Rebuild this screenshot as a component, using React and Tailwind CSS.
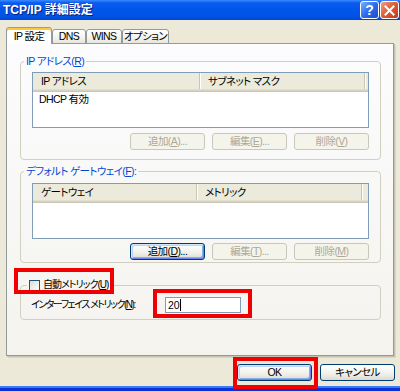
import React from 'react';

const F = "font-['Liberation_Sans','Noto_Sans_CJK_JP',sans-serif] [font-feature-settings:'palt']";
const T = 'text-[10.5px] tracking-[-0.6px] whitespace-nowrap';

function U({ children }) {
  return <span className="underline underline-offset-[1px]">{children}</span>;
}

function Btn({ children, disabled, focused, w = 'w-[75px]' }) {
  if (disabled) {
    return (
      <div className={`${w} h-[17px] flex items-center justify-center rounded-[3px] border border-[#C9C7BA] bg-[#F5F4EA] text-[#ACA899] ${T} leading-none`}>
        {children}
      </div>
    );
  }
  return (
    <div
      className={`${w} h-[17px] flex items-center justify-center rounded-[3px] border border-[#003C74] bg-[linear-gradient(to_bottom,#FFFFFF,#F0F0EA_60%,#DCDAD0)] text-black ${T} leading-none ${
        focused ? 'shadow-[inset_1px_1px_0_#CEE7FF,inset_-1px_-1px_0_#6982EE,inset_2px_2px_0_#BCD4F6,inset_-2px_-2px_0_#89ADE4]' : ''
      }`}
    >
      {children}
    </div>
  );
}

function ListBox({ col1, col2, rows, w1 = 'w-[167px]' }) {
  return (
    <div className="h-[56px] border border-[#7F9DB9] bg-white flex flex-col">
      <div className={`h-[19px] flex bg-[#EBEADB] shadow-[inset_0_-1px_0_#CBC7B8,inset_0_-2px_0_#D6D2C2,inset_0_-3px_0_#E2DECD] ${T} leading-none`}>
        <div className={`${w1} h-[16px] flex items-center pl-[8px] border-r border-[#C7C5B2] shadow-[1px_0_0_#FFFFFF]`}>{col1}</div>
        <div className="w-[165px] h-[16px] flex items-center pl-[8px] border-r border-[#C7C5B2] shadow-[1px_0_0_#FFFFFF]">{col2}</div>
      </div>
      {rows.map((r) => (
        <div key={r} className={`h-[14px] flex items-center pl-[6px] ${T} leading-none text-black`}>
          {r}
        </div>
      ))}
    </div>
  );
}

export default function App() {
  return (
    <div className={`${F} relative w-[400px] h-[391px] bg-[#ECE9D8] flex flex-col overflow-hidden text-black`}>
      {/* Title bar */}
      <div className="h-[20px] shrink-0 flex items-center pl-[3px] pr-[1px] bg-[linear-gradient(to_bottom,#3D8BFF_0%,#0A5CEF_14%,#0055E9_50%,#0052E3_85%,#0043D2_100%)]">
        <span className="text-white font-bold text-[12px] leading-none [text-shadow:1px_1px_0_#0A1E80] whitespace-nowrap">TCP/IP 詳細設定</span>
        <div className="ml-auto flex gap-[1px]">
          <div className="w-[19px] h-[18px] rounded-[3px] border border-white bg-[linear-gradient(135deg,#7FAEFF,#2E6BF0_50%,#1A4CCB)] flex items-center justify-center text-white font-bold text-[14px] leading-none font-['Liberation_Sans',sans-serif]">
            ?
          </div>
          <div className="w-[19px] h-[18px] rounded-[3px] border border-white bg-[linear-gradient(135deg,#F0A088,#E0592F_50%,#C23A1C)] flex items-center justify-center">
            <svg width="11" height="11" viewBox="0 0 11 11">
              <path d="M1.5 1.5 L9.5 9.5 M9.5 1.5 L1.5 9.5" stroke="white" strokeWidth="2" strokeLinecap="square" />
            </svg>
          </div>
        </div>
      </div>

      {/* Body */}
      <div className="flex-1 flex flex-col pl-[6px] pr-[5px] pt-[7px]">
        {/* Tabs */}
        <div className={`flex items-end relative z-10 -mb-px ${T} leading-none`}>
          <div className="w-[46px] h-[17px] bg-white border-x border-t border-[#E68B2C] border-x-[#919B9C] rounded-t-[3px] shadow-[inset_0_2px_0_#FFC83C] flex items-center justify-center pt-[1px]">
            IP 設定
          </div>
          <div className="w-[34px] h-[15px] border border-[#919B9C] rounded-t-[3px] bg-[linear-gradient(to_bottom,#FFFFFF,#F3F2EC_60%,#E7E5DC)] flex items-center justify-center">
            DNS
          </div>
          <div className="w-[36px] h-[15px] border border-[#919B9C] rounded-t-[3px] bg-[linear-gradient(to_bottom,#FFFFFF,#F3F2EC_60%,#E7E5DC)] flex items-center justify-center">
            WINS
          </div>
          <div className="w-[47px] h-[15px] border border-[#919B9C] rounded-t-[3px] bg-[linear-gradient(to_bottom,#FFFFFF,#F3F2EC_60%,#E7E5DC)] flex items-center justify-center">
            オプション
          </div>
        </div>

        {/* Panel */}
        <div className="w-[388px] h-[313px] shrink-0 border border-[#919B9C] bg-[linear-gradient(to_bottom,#FCFCFE,#F4F3EE)] shadow-[1px_1px_0_#C5C2B2,2px_2px_0_#DAD7CA] pl-[13px] pr-[12px] pt-[10px] flex flex-col">
          {/* IP address group */}
          <fieldset className="border border-[#D0D0BF] rounded-[4px] p-0 m-0 min-w-0">
            <legend className={`ml-[3px] px-[2px] ${T} leading-[14px] text-[#0046D5]`}>
              IP アドレス(<U>R</U>)
            </legend>
            <div className="pt-[4px] px-[11px] pb-[9px]">
              <ListBox col1="IP アドレス" col2="サブネット マスク" rows={['DHCP 有効']} />
              <div className="mt-[5px] flex justify-end gap-[7px]">
                <Btn disabled>追加(<U>A</U>)...</Btn>
                <Btn disabled>編集(<U>E</U>)...</Btn>
                <Btn disabled>削除(<U>V</U>)</Btn>
              </div>
            </div>
          </fieldset>

          {/* Default gateway group */}
          <fieldset className="mt-[4px] border border-[#D0D0BF] rounded-[4px] p-0 min-w-0">
            <legend className={`ml-[3px] px-[2px] ${T} leading-[14px] text-[#0046D5]`}>
              デフォルト ゲートウェイ(<U>F</U>):
            </legend>
            <div className="pt-[5px] px-[11px] pb-[2px]">
              <ListBox col1="ゲートウェイ" col2="メトリック" rows={[]} w1="w-[164px]" />
              <div className="mt-[4px] flex justify-end gap-[7px]">
                <Btn focused>追加(<U>D</U>)...</Btn>
                <Btn disabled>編集(<U>T</U>)...</Btn>
                <Btn disabled>削除(<U>M</U>)</Btn>
              </div>
            </div>
          </fieldset>

          {/* Metric group */}
          <fieldset className="mt-[15px] border border-[#D0D0BF] rounded-[4px] p-0 min-w-0">
            <legend className={`ml-[6px] px-[2px] ${T} leading-[14px] flex items-center gap-[3px]`}>
              <span className="w-[11px] h-[11px] border border-[#1C5180] bg-[linear-gradient(135deg,#DCDCD7,#FFFFFF)] inline-block" />
              <span className="text-[10px] tracking-[-1px]">自動メトリック(<U>U</U>)</span>
            </legend>
            <div className={`pt-[5px] pl-[10px] pb-[6px] flex items-center ${T} leading-none`}>
              <div className="w-[134px] text-[10px] tracking-[-1.5px]">インターフェイス メトリック(<U>N</U>):</div>
              <div className="w-[76px] h-[16px] border border-[#7F9DB9] bg-white flex items-center pl-[2px] tracking-normal">
                <span>20</span>
                <span className="w-px h-[12px] bg-black" />
              </div>
            </div>
          </fieldset>
        </div>

        {/* Bottom buttons */}
        <div className="mt-[8px] flex justify-end gap-[8px]">
          <Btn focused>OK</Btn>
          <Btn>キャンセル</Btn>
        </div>

        <div className="flex-1" />
      </div>

      {/* bottom frame */}
      <div className="h-[5px] shrink-0 bg-[#0831D9] border-t-2 border-[#3C7AF0]" />

      {/* Red annotation boxes */}
      <div className="absolute left-[14px] top-[268px] w-[100px] h-[26px] border-4 border-[#F00000]" />
      <div className="absolute left-[153px] top-[289px] w-[99px] h-[29px] border-4 border-[#F00000]" />
      <div className="absolute left-[233px] top-[357px] w-[85px] h-[32px] border-4 border-[#F00000]" />
    </div>
  );
}
